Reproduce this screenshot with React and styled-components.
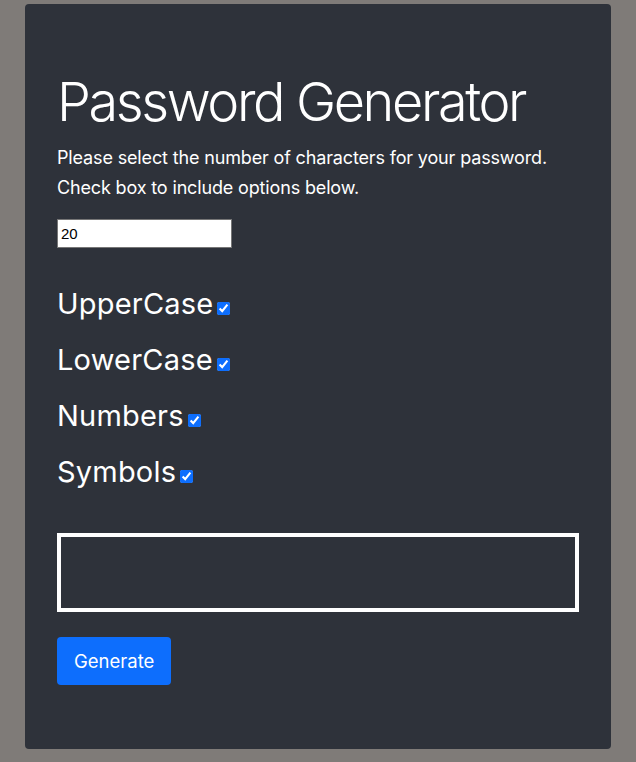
import React, { useState } from "react"
import styled, { createGlobalStyle } from "styled-components"

const GlobalStyle = createGlobalStyle`
  html, body {
    margin: 0;
    padding: 0;
    background-color: #7f7b78;
  }
  body {
    font-family: Inter, "Liberation Sans", sans-serif;
    color: #ffffff;
  }
`

const Page = styled.div`
  padding: 4px 25px 13px 25px;
`

const Card = styled.div`
  background-color: #2e323a;
  border-radius: 4px;
  padding: 64px 32px;
  display: flex;
  flex-direction: column;
  align-items: flex-start;
`

const Title = styled.h1`
  font-size: 54px;
  font-weight: 300;
  line-height: 67px;
  margin: 0 0 8px 0;
  letter-spacing: -2.4px;
`

const Lead = styled.p`
  font-size: 18px;
  font-weight: 400;
  line-height: 30px;
  margin: 0 0 16px 0;
  letter-spacing: -0.15px;
`

const LengthInput = styled.input`
  box-sizing: border-box;
  width: 175px;
  height: 29px;
  padding: 1px 3px;
  border: 1px solid #767676;
  font-family: "Liberation Sans", Arial, sans-serif;
  font-size: 15px;
  color: #000;
  background: #fff;
  margin-bottom: 39px;
`

const OptionRow = styled.label`
  display: flex;
  align-items: baseline;
  font-size: 29px;
  line-height: 34px;
  letter-spacing: 0.2px;
  margin-bottom: 22px;
`

const Check = styled.input`
  width: 13px;
  height: 13px;
  margin: 0 0 0 4px;
  accent-color: #0d6efd;
  position: relative;
  top: 1px;
`

const Output = styled.div`
  box-sizing: border-box;
  align-self: stretch;
  height: 79px;
  border: 4px solid #ffffff;
  margin-top: 22px;
  margin-bottom: 25px;
`

const Button = styled.button`
  background-color: #0d6efd;
  color: #fff;
  border: none;
  border-radius: 4px;
  height: 48px;
  padding: 0 17px;
  font-family: Inter, "Liberation Sans", sans-serif;
  font-size: 18.5px;
  cursor: pointer;
`

const options = ["UpperCase", "LowerCase", "Numbers", "Symbols"]

export default function App() {
  const [length, setLength] = useState("20")
  const [checked, setChecked] = useState({
    UpperCase: true,
    LowerCase: true,
    Numbers: true,
    Symbols: true,
  })

  return (
    <Page>
      <GlobalStyle />
      <Card>
        <Title>Password Generator</Title>
        <Lead>
          Please select the number of characters for your password.
          <br />
          Check box to include options below.
        </Lead>
        <LengthInput value={length} onChange={(e) => setLength(e.target.value)} />
        {options.map((opt) => (
          <OptionRow key={opt}>
            {opt}
            <Check
              type="checkbox"
              checked={checked[opt]}
              onChange={() => setChecked({ ...checked, [opt]: !checked[opt] })}
            />
          </OptionRow>
        ))}
        <Output />
        <Button>Generate</Button>
      </Card>
    </Page>
  )
}
